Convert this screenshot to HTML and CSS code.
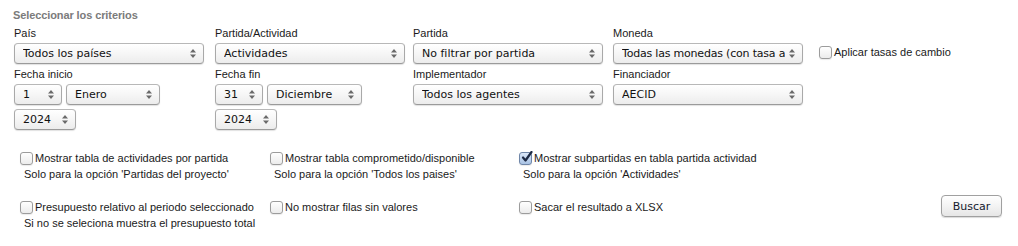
FILE: index.html
```html
<!DOCTYPE html>
<html lang="es">
<head>
<meta charset="utf-8">
<title>Seleccionar los criterios</title>
<link rel="stylesheet" href="styles.css">
</head>
<body>
<div class="page">
  <div class="title">Seleccionar los criterios</div>

  <div class="criteria">
    <div class="field">
      <div class="label">País</div>
      <div class="select w-full"><span class="val">Todos los países</span><svg class="arr" width="6" height="9" viewBox="0 0 6 9"><path d="M3 0L6 3.5H0Z M3 9L6 5.5H0Z" fill="#6a6a6a"/></svg></div>
    </div>
    <div class="field">
      <div class="label">Partida/Actividad</div>
      <div class="select w-full"><span class="val">Actividades</span><svg class="arr" width="6" height="9" viewBox="0 0 6 9"><path d="M3 0L6 3.5H0Z M3 9L6 5.5H0Z" fill="#6a6a6a"/></svg></div>
    </div>
    <div class="field">
      <div class="label">Partida</div>
      <div class="select w-full"><span class="val">No filtrar por partida</span><svg class="arr" width="6" height="9" viewBox="0 0 6 9"><path d="M3 0L6 3.5H0Z M3 9L6 5.5H0Z" fill="#6a6a6a"/></svg></div>
    </div>
    <div class="field">
      <div class="label">Moneda</div>
      <div class="select w-full"><span class="val tight">Todas las monedas (con tasa a</span><svg class="arr" width="6" height="9" viewBox="0 0 6 9"><path d="M3 0L6 3.5H0Z M3 9L6 5.5H0Z" fill="#6a6a6a"/></svg></div>
    </div>
    <div class="field side">
      <label class="check"><span class="cb"></span>Aplicar tasas de cambio</label>
    </div>

    <div class="field">
      <div class="label">Fecha inicio</div>
      <div class="inline">
        <div class="select w-day"><span class="val">1</span><svg class="arr" width="6" height="9" viewBox="0 0 6 9"><path d="M3 0L6 3.5H0Z M3 9L6 5.5H0Z" fill="#6a6a6a"/></svg></div>
        <div class="select w-month"><span class="val">Enero</span><svg class="arr" width="6" height="9" viewBox="0 0 6 9"><path d="M3 0L6 3.5H0Z M3 9L6 5.5H0Z" fill="#6a6a6a"/></svg></div>
      </div>
      <div class="select w-year"><span class="val">2024</span><svg class="arr" width="6" height="9" viewBox="0 0 6 9"><path d="M3 0L6 3.5H0Z M3 9L6 5.5H0Z" fill="#6a6a6a"/></svg></div>
    </div>
    <div class="field">
      <div class="label">Fecha fin</div>
      <div class="inline">
        <div class="select w-day"><span class="val">31</span><svg class="arr" width="6" height="9" viewBox="0 0 6 9"><path d="M3 0L6 3.5H0Z M3 9L6 5.5H0Z" fill="#6a6a6a"/></svg></div>
        <div class="select w-month2"><span class="val">Diciembre</span><svg class="arr" width="6" height="9" viewBox="0 0 6 9"><path d="M3 0L6 3.5H0Z M3 9L6 5.5H0Z" fill="#6a6a6a"/></svg></div>
      </div>
      <div class="select w-year"><span class="val">2024</span><svg class="arr" width="6" height="9" viewBox="0 0 6 9"><path d="M3 0L6 3.5H0Z M3 9L6 5.5H0Z" fill="#6a6a6a"/></svg></div>
    </div>
    <div class="field">
      <div class="label">Implementador</div>
      <div class="select w-full"><span class="val">Todos los agentes</span><svg class="arr" width="6" height="9" viewBox="0 0 6 9"><path d="M3 0L6 3.5H0Z M3 9L6 5.5H0Z" fill="#6a6a6a"/></svg></div>
    </div>
    <div class="field">
      <div class="label">Financiador</div>
      <div class="select w-full"><span class="val">AECID</span><svg class="arr" width="6" height="9" viewBox="0 0 6 9"><path d="M3 0L6 3.5H0Z M3 9L6 5.5H0Z" fill="#6a6a6a"/></svg></div>
    </div>
  </div>

  <div class="options">
    <div class="opt">
      <label class="check"><span class="cb"></span>Mostrar tabla de actividades por partida</label>
      <div class="hint">Solo para la opción 'Partidas del proyecto'</div>
    </div>
    <div class="opt">
      <label class="check"><span class="cb"></span>Mostrar tabla comprometido/disponible</label>
      <div class="hint">Solo para la opción 'Todos los paises'</div>
    </div>
    <div class="opt">
      <label class="check"><span class="cb checked"><svg width="13" height="13" viewBox="0 0 13 13"><path d="M3 6.5L5.5 9.5L11.5 1" fill="none" stroke="#1d2a44" stroke-width="2.2" stroke-linecap="round" stroke-linejoin="round"/></svg></span>Mostrar subpartidas en tabla partida actividad</label>
      <div class="hint">Solo para la opción 'Actividades'</div>
    </div>
    <div class="opt"></div>

    <div class="opt">
      <label class="check"><span class="cb"></span>Presupuesto relativo al periodo seleccionado</label>
      <div class="hint">Si no se seleciona muestra el presupuesto total</div>
    </div>
    <div class="opt">
      <label class="check"><span class="cb"></span>No mostrar filas sin valores</label>
    </div>
    <div class="opt">
      <label class="check"><span class="cb"></span>Sacar el resultado a XLSX</label>
    </div>
    <div class="opt btn-cell">
      <button class="btn" type="button">Buscar</button>
    </div>
  </div>
</div>
</body>
</html>
```

FILE: styles.css
```css
html, body {
  margin: 0;
  padding: 0;
  background: #ffffff;
}

.page {
  padding: 8px 0 0 14px;
  font-family: "Liberation Sans", Arial, Helvetica, sans-serif;
  font-size: 11px;
  color: #1a1a1a;
}

.title {
  margin-left: -1px;
  font-weight: bold;
  font-size: 11px;
  line-height: 14px;
  color: #7b7b7b;
  letter-spacing: -0.1px;
}

.criteria {
  display: grid;
  grid-template-columns: 201px 198px 200px 200px auto;
  margin-top: 4px;
  align-items: start;
}

.field {
  display: flex;
  flex-direction: column;
  margin-bottom: 3px;
}

.label {
  line-height: 14px;
  height: 14px;
  margin-bottom: 3px;
}

.side {
  padding-top: 19px;
  padding-left: 6px;
}

.select {
  box-sizing: border-box;
  height: 21px;
  border: 1px solid #a9a9a9;
  border-top-color: #b8b8b8;
  border-bottom-color: #9a9a9a;
  border-radius: 4px;
  background: linear-gradient(#ffffff, #f6f6f6 50%, #ececec);
  box-shadow: 0 1px 1px rgba(0, 0, 0, 0.12);
  display: flex;
  align-items: center;
  padding: 0 7px 0 8px;
  font-family: "DejaVu Sans", Verdana, sans-serif;
  font-size: 11px;
  color: #111;
  overflow: hidden;
  white-space: nowrap;
}

.select .val {
  flex: 1;
  min-width: 0;
  overflow: hidden;
}

.select .val.tight {
  letter-spacing: -0.2px;
}

.select .arr {
  flex: none;
  margin-left: 4px;
}

.w-full { width: 190px; }
.w-day { width: 48px; }
.w-month { width: 94px; }
.w-month2 { width: 95px; }
.w-year { width: 62px; margin-top: 4px; }

.inline {
  display: flex;
  gap: 4px;
}

.check {
  display: flex;
  align-items: center;
  line-height: 14px;
  height: 14px;
  white-space: nowrap;
}

.cb {
  box-sizing: border-box;
  width: 13px;
  height: 13px;
  margin-right: 2px;
  border: 1px solid #9c9c9c;
  border-radius: 3px;
  background: linear-gradient(#ffffff, #ececec);
  box-shadow: 0 1px 1px rgba(0, 0, 0, 0.08);
  position: relative;
  flex: none;
}

.cb.checked {
  border-color: #6f86a8;
  background: linear-gradient(#dbe8f8, #a9c2e4);
}

.cb.checked svg {
  position: absolute;
  left: 0;
  top: -2px;
}

.options {
  display: grid;
  grid-template-columns: 250px 249px 250px auto;
  grid-auto-rows: 49px;
  margin-top: 18px;
  margin-left: 6px;
}

.opt {
  display: flex;
  flex-direction: column;
}

.hint {
  margin-top: 2px;
  margin-left: 4px;
  line-height: 14px;
}

.btn-cell {
  align-items: flex-start;
  padding-left: 172px;
}

.btn {
  box-sizing: border-box;
  width: 61px;
  height: 22px;
  margin-top: -5px;
  border: 1px solid #a0a0a0;
  border-radius: 4px;
  background: linear-gradient(#ffffff, #f3f3f3 50%, #e6e6e6);
  box-shadow: 0 1px 1px rgba(0, 0, 0, 0.15);
  font-family: "DejaVu Sans", Verdana, sans-serif;
  font-size: 11px;
  color: #141a2e;
  padding: 0;
}
```
